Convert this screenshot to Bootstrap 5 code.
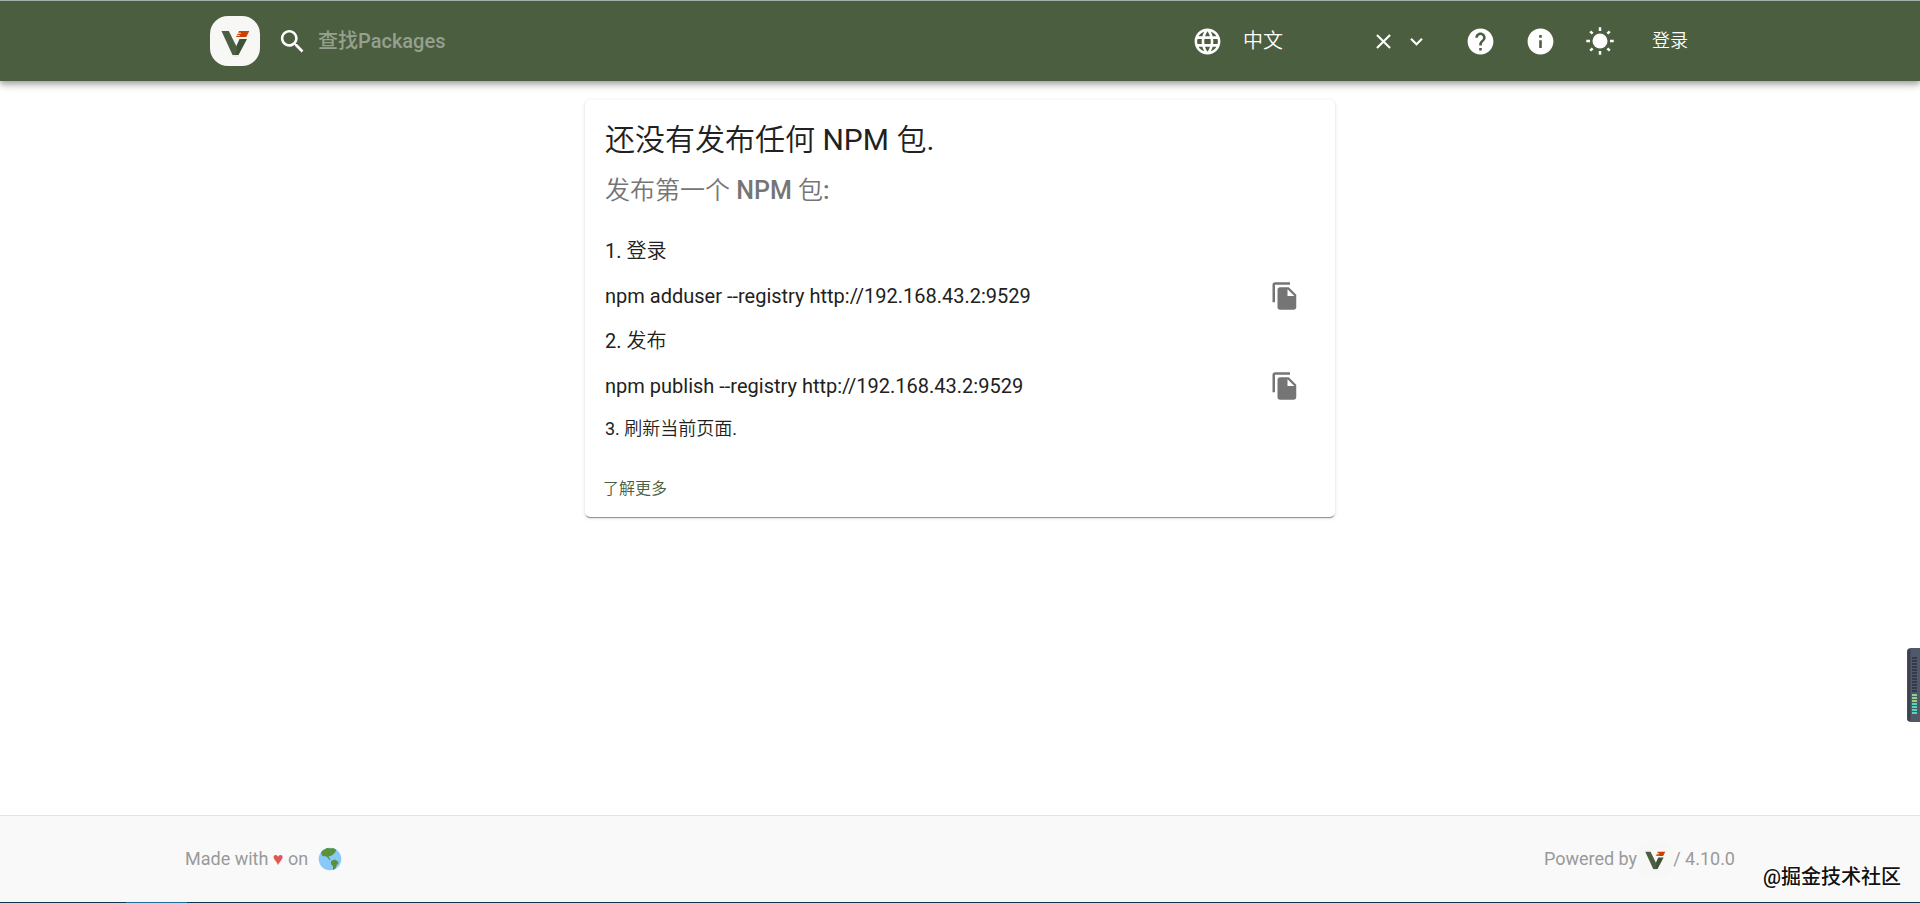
<!DOCTYPE html>
<html lang="zh-CN">
<head>
<meta charset="utf-8">
<meta name="viewport" content="width=device-width, initial-scale=1">
<title>Verdaccio</title>
<link href="https://cdn.jsdelivr.net/npm/bootstrap@5.3.0/dist/css/bootstrap.min.css" rel="stylesheet">
<style>
  body { font-family: Roboto, "Noto Sans CJK SC", sans-serif; font-size: 20px; line-height: 30px; color: #212121; background: #fff; }
  .han { font-weight: 350; }
  .app-bar { background: #4b5e40; border-top: 1px solid #a3ada9; box-shadow: 0 2px 5px rgba(0,0,0,.2), 0 5px 6px rgba(0,0,0,.14), 0 1px 12px rgba(0,0,0,.12); }
  .bar-inner { max-width: 1500px; min-height: 80px; }
  .foot-inner { max-width: 1550px; }
  .app-bar svg, .copy-btn svg { display: block; fill: currentColor; }
  .brand-link { margin-right: 17px; }
  .search-box { gap: 10px; }
  .search-box .form-control { font-size: 20px; line-height: 30px; font-weight: 500; color: #fff; width: 520px; }
  .search-box .form-control::placeholder { color: #95a08e; opacity: 1; }
  .bar-btn { width: 60px; height: 60px; color: #fff; }
  .lang-select { width: 120px; font-size: 20px; line-height: 30px; font-weight: 350; color: #fff; background: transparent; appearance: none; border: 0; }
  .lang-box { margin-right: 21px; }
  .login-btn { font-size: 18px; line-height: 30px; font-weight: 350; color: #fff; padding: 4px 22px; }
  .help-card { max-width: 750px; margin-top: 19px; border: 0; border-radius: 5px; box-shadow: 0 2px 1px -1px rgba(0,0,0,.3), 0 1px 1px rgba(0,0,0,.16), 0 1px 4px rgba(0,0,0,.12); color: inherit; }
  .help-body { padding: 20px 20px 30px; }
  .help-title { font-size: 30px; line-height: 40px; font-weight: 400; margin-bottom: 11px; }
  .help-sub { font-size: 25px; line-height: 40px; font-weight: 500; color: #757575; margin-bottom: 25px; }
  .copy-btn { width: 60px; height: 60px; color: #757575; }
  .text-note { font-size: 18px; line-height: 25px; }
  .card-actions { padding: 0 10px 10px; }
  .more-link { font-size: 16px; line-height: 28px; font-weight: 350; color: #4b5e40; padding: 4px 8px; display: inline-block; text-decoration: none; }
  .foot-bar { background: #f9f9f9; border-top: 1px solid #e3e3e3; font-size: 18px; line-height: 26px; color: #999; }
  .foot-inner { min-height: 86px; }
  .task-line { height: 1px; background: linear-gradient(90deg, #12364a 126px, #1a6f96 126px, #1a6f96 187px, #12364a 187px); }
  .heart { color: #e25555; font-family: "Liberation Sans", sans-serif; }
  .cpu-meter { position: fixed; right: 0; top: 648px; z-index: 5; }
  .site-mark { position: absolute; right: 19px; bottom: 12px; font-size: 20px; line-height: 28px; font-weight: 500; color: #111; text-shadow: -1px -1px 0 #fff, -2px 0 1px #fff, 1px 1px 0 #fff; }
</style>
</head>
<body class="d-flex flex-column min-vh-100">
<svg width="0" height="0" class="position-absolute" aria-hidden="true">
  <symbol id="logo" viewBox="0 0 50 50">
    <rect width="50" height="50" rx="18" fill="#f7f7f6"/>
    <path d="M22 39.500h7l-1 1h-5z" fill="#ddd"/>
    <path d="M29.500 23H37l-8.500 16H23l2.500-7z" fill="#405236"/>
    <path d="M11.500 15h7.300l7.700 15.500 1 3L25.500 39h-3z" fill="#4b5e40"/>
    <path d="M29 15h10.300l-3 6H26l.5-1.200h3.500v-.8h-3l.8-1.300h3v-.9h-2.600z" fill="#cd4000"/>
  </symbol>
  <symbol id="copy" viewBox="0 0 24 24"><path d="M16 1H4c-1.100 0-2 .9-2 2v14h2V3h12V1zm-1 4l6 6v10c0 1.100-.9 2-2 2H7.990C6.890 23 6 22.100 6 21l.01-14c0-1.100.89-2 1.990-2h7zm-1 7h5.500L14 6.500V12z"/></symbol>
</svg>

<header class="app-bar">
  <div class="bar-inner container-fluid px-0 d-flex align-items-center">
    <a href="#" class="brand-link" aria-label="Verdaccio"><svg width="50" height="50"><use href="#logo"/></svg></a>
    <form class="search-box d-flex align-items-center me-auto">
      <label for="q" class="text-white"><svg width="31" height="31" viewBox="0 0 24 24"><path d="M15.500 14h-.79l-.28-.27C15.410 12.590 16 11.110 16 9.500 16 5.910 13.090 3 9.500 3S3 5.910 3 9.500 5.910 16 9.500 16c1.610 0 3.090-.59 4.230-1.570l.27.28v.79l5 4.990L20.490 19l-4.990-5zm-6 0C7.010 14 5 11.990 5 9.500S7.010 5 9.500 5 14 7.010 14 9.500 11.990 14 9.500 14z"/></svg></label>
      <input id="q" type="text" class="form-control border-0 bg-transparent shadow-none p-0" placeholder="查找Packages">
    </form>
    <div class="lang-box d-flex align-items-center text-white">
      <label for="lang" class="me-3 pe-1"><svg width="31" height="31" viewBox="0 0 24 24"><path d="M11.990 2C6.470 2 2 6.480 2 12s4.470 10 9.990 10C17.520 22 22 17.520 22 12S17.520 2 11.990 2zm6.930 6h-2.950c-.32-1.250-.78-2.450-1.380-3.560 1.840.63 3.370 1.910 4.330 3.560zM12 4.040c.83 1.200 1.480 2.530 1.910 3.960h-3.820c.43-1.430 1.080-2.760 1.910-3.960zM4.260 14C4.100 13.360 4 12.690 4 12s.1-1.360.26-2h3.380c-.08.66-.14 1.320-.14 2s.06 1.340.14 2H4.260zm.82 2h2.950c.32 1.250.78 2.450 1.380 3.560-1.840-.63-3.370-1.900-4.330-3.560zm2.950-8H5.080c.96-1.660 2.490-2.930 4.330-3.560C8.810 5.550 8.350 6.750 8.030 8zM12 19.960c-.83-1.200-1.480-2.530-1.910-3.960h3.820c-.43 1.430-1.080 2.760-1.910 3.960zM14.340 14H9.660c-.09-.66-.16-1.320-.16-2s.07-1.350.16-2h4.680c.09.65.16 1.320.16 2s-.07 1.340-.16 2zm.25 5.560c.6-1.110 1.060-2.310 1.380-3.560h2.950c-.96 1.650-2.490 2.930-4.330 3.560zM16.360 14c.08-.66.14-1.320.14-2s-.06-1.340-.14-2h3.380c.16.64.26 1.310.26 2s-.1 1.360-.26 2h-3.380z"/></svg></label>
      <select id="lang" class="lang-select p-0"><option>中文</option></select>
      <button type="button" class="btn border-0 p-0 ms-2 text-white" aria-label="Clear"><svg width="25" height="25" viewBox="0 0 24 24"><path d="M19 6.410L17.590 5 12 10.590 6.410 5 5 6.410 10.590 12 5 17.590 6.410 19 12 13.410 17.590 19 19 17.590 13.410 12z"/></svg></button>
      <button type="button" class="btn border-0 p-0 ms-2 text-white" aria-label="Open"><svg width="25" height="25" viewBox="0 0 24 24"><path d="M16.590 8.590L12 13.170 7.410 8.590 6 10l6 6 6-6z"/></svg></button>
    </div>
    <button type="button" class="bar-btn btn border-0 p-0 d-flex align-items-center justify-content-center" aria-label="Help"><svg width="31" height="31" viewBox="0 0 24 24"><path d="M12 2C6.480 2 2 6.480 2 12s4.480 10 10 10 10-4.480 10-10S17.520 2 12 2zm1 17h-2v-2h2v2zm2.070-7.750l-.9.920C13.450 12.900 13 13.500 13 15h-2v-.5c0-1.100.45-2.100 1.170-2.830l1.240-1.260c.37-.36.59-.86.59-1.410 0-1.100-.9-2-2-2s-2 .9-2 2H8c0-2.210 1.790-4 4-4s4 1.790 4 4c0 .88-.36 1.680-.93 2.250z"/></svg></button>
    <button type="button" class="bar-btn btn border-0 p-0 d-flex align-items-center justify-content-center" aria-label="Info"><svg width="31" height="31" viewBox="0 0 24 24"><path d="M12 2C6.480 2 2 6.480 2 12s4.480 10 10 10 10-4.480 10-10S17.520 2 12 2zm1 15h-2v-6h2v6zm0-8h-2V7h2v2z"/></svg></button>
    <button type="button" class="bar-btn btn border-0 p-0 d-flex align-items-center justify-content-center" aria-label="Light mode"><svg width="30" height="30" viewBox="0 0 24 24"><circle cx="12" cy="12" r="6"/><path d="M11 1h2v3h-2zM11 20h2v3h-2zM1 11h3v2H1zM20 11h3v2h-3zM3.500 5l1.400-1.400 1.900 1.800L5.400 6.800zM17.200 5.400l1.900-1.800L20.500 5l-1.900 1.800zM17.200 18.600l1.400-1.400 1.900 1.800-1.400 1.400zM3.500 19l1.900-1.800 1.400 1.400-1.900 1.800z"/></svg></button>
    <button type="button" class="login-btn btn border-0">登录</button>
  </div>
</header>

<main class="flex-grow-1 px-3">
  <section class="help-card card mx-auto">
    <div class="help-body">
      <h1 class="help-title"><span class="han">还没有发布任何</span> NPM <span class="han">包</span>.</h1>
      <h2 class="help-sub"><span class="han">发布第一个</span> NPM <span class="han">包</span>:</h2>
      <div>1. <span class="han">登录</span></div>
      <div class="d-flex align-items-center justify-content-between">
        <span>npm adduser --registry http://192.168.43.2:9529</span>
        <button type="button" class="copy-btn btn border-0 p-0 d-flex align-items-center justify-content-center" aria-label="Copy"><svg width="30" height="30"><use href="#copy"/></svg></button>
      </div>
      <div>2. <span class="han">发布</span></div>
      <div class="d-flex align-items-center justify-content-between">
        <span>npm publish --registry http://192.168.43.2:9529</span>
        <button type="button" class="copy-btn btn border-0 p-0 d-flex align-items-center justify-content-center" aria-label="Copy"><svg width="30" height="30"><use href="#copy"/></svg></button>
      </div>
      <div class="text-note">3. <span class="han">刷新当前页面</span>.</div>
    </div>
    <div class="card-actions"><a href="#" class="more-link">了解更多</a></div>
  </section>
</main>

<footer class="foot-bar position-relative">
  <div class="foot-inner container-fluid px-0 d-flex align-items-center justify-content-between">
    <div class="d-flex align-items-center">
      <span>Made with <span class="heart">♥</span> on</span>
      <svg class="ms-2" width="28" height="26" viewBox="0 0 26 26" aria-label="Earth"><circle cx="13" cy="13" r="11.300" fill="#88c9f9"/><path d="M5 5l5-3 4 .5 2-.5 3 1.500-.5 2.500-3 3-2 1-2 .5 1.500 2.500 1 1-2-.5-2.500-3L5.500 10 4 7zM14 15l4-1.500 3 2 .5 1.500-2 2.500-1 3-2.500 1.500v-3.500l-2-2.500z" fill="#5c913b"/></svg>
    </div>
    <div class="d-flex align-items-center">
      <span>Powered by</span>
      <svg width="36" height="36"><use href="#logo"/></svg>
      <span>/ 4.10.0</span>
    </div>
  </div>
  <div class="task-line"></div>
  <div class="site-mark">@掘金技术社区</div>
</footer>

<svg class="cpu-meter" width="13" height="74" viewBox="0 0 13 74" aria-hidden="true">
  <rect width="20" height="74" rx="4" fill="#50586a"/>
  <rect x=".5" y="1" width="3" height="72" rx="1.500" fill="#3c4250"/>
  <path d="M7.500 9v36" stroke="#353b4a" stroke-width="5" stroke-dasharray="2 1"/>
  <path d="M7.500 46v10" stroke="#8fd18a" stroke-width="5" stroke-dasharray="2 1"/>
  <path d="M7.500 55v12" stroke="#55d3b4" stroke-width="5" stroke-dasharray="2 1"/>
</svg>
<script src="https://cdn.jsdelivr.net/npm/bootstrap@5.3.0/dist/js/bootstrap.bundle.min.js"></script>
</body>
</html>
